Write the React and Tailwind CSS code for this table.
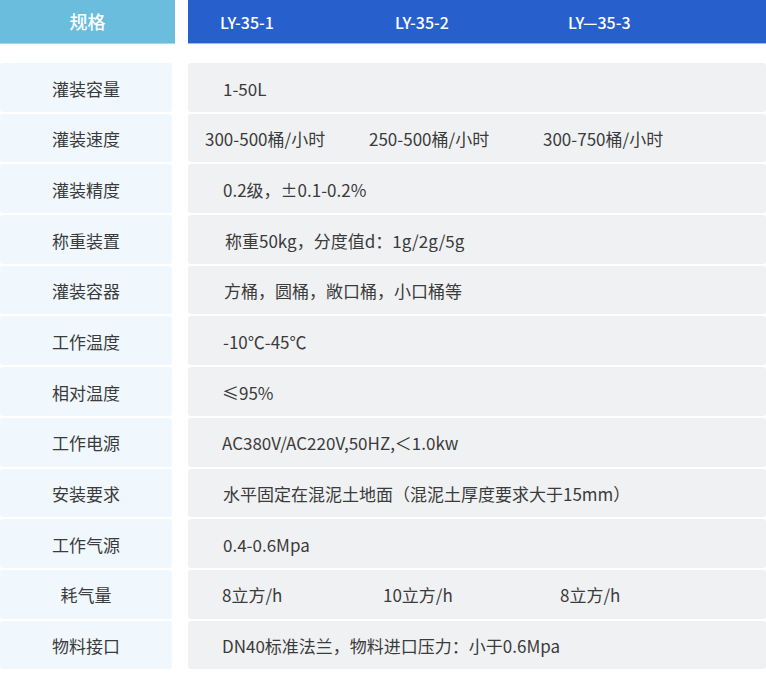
const header = [
  { text: "LY-35-1", w: "w-[175px]" },
  { text: "LY-35-2", w: "w-[173px]" },
  { text: "LY—35-3", w: "" },
];

const rows = [
  { label: "灌装容量", pad: "pl-[35px]", cells: [{ text: "1-50L" }] },
  {
    label: "灌装速度",
    pad: "pl-[17px]",
    cells: [
      { text: "300-500桶/小时", w: "w-[164px]" },
      { text: "250-500桶/小时", w: "w-[174px]" },
      { text: "300-750桶/小时" },
    ],
  },
  { label: "灌装精度", pad: "pl-[35px]", cells: [{ text: "0.2级，±0.1-0.2%" }] },
  { label: "称重装置", pad: "pl-[37px]", cells: [{ text: "称重50kg，分度值d：1g/2g/5g" }] },
  { label: "灌装容器", pad: "pl-[36px]", cells: [{ text: "方桶，圆桶，敞口桶，小口桶等" }] },
  { label: "工作温度", pad: "pl-[35px]", cells: [{ text: "-10℃-45℃" }] },
  { label: "相对温度", pad: "pl-[34px]", cells: [{ text: "≤95%" }] },
  { label: "工作电源", pad: "pl-[34px]", cells: [{ text: "AC380V/AC220V,50HZ,＜1.0kw" }] },
  { label: "安装要求", pad: "pl-[35px]", cells: [{ text: "水平固定在混泥土地面（混泥土厚度要求大于15mm）" }] },
  { label: "工作气源", pad: "pl-[35px]", cells: [{ text: "0.4-0.6Mpa" }] },
  {
    label: "耗气量",
    pad: "pl-[34px]",
    cells: [
      { text: "8立方/h", w: "w-[161px]" },
      { text: "10立方/h", w: "w-[177px]" },
      { text: "8立方/h" },
    ],
  },
  { label: "物料接口", pad: "pl-[34px]", cells: [{ text: "DN40标准法兰，物料进口压力：小于0.6Mpa" }] },
];

export default function App() {
  return (
    <div
      className="w-[766px] h-[674px] bg-white text-[17px] text-[#3b3b3b]"
      style={{ fontFamily: '"Noto Sans CJK SC", "Noto Sans", sans-serif' }}
    >
      {/* Header */}
      <div className="flex h-[44px] gap-[13px]">
        <div className="w-[175px] flex items-center justify-center bg-[#6bbddd] border-b border-[#a6d6ec] text-white text-[18px] font-medium">
          规格
        </div>
        <div className="flex-1 flex items-center pl-[32px] bg-[#2760cc] border-b border-[#9dbbea] text-white text-[16px] font-medium">
          {header.map((h) => (
            <span key={h.text} className={h.w}>
              {h.text}
            </span>
          ))}
        </div>
      </div>

      {/* Spec rows */}
      <div className="mt-[19px] flex flex-col gap-[2px]">
        {rows.map((row) => (
          <div key={row.label} className="flex h-[48.7px] gap-[16px]">
            <div className="w-[172px] flex items-center justify-center bg-[#f0f8fe] rounded-[3px] pt-[2px]">
              {row.label}
            </div>
            <div className={`flex-1 flex items-center bg-[#f0f1f3] rounded-[3px] pt-[2px] ${row.pad}`}>
              {row.cells.map((c, i) => (
                <span key={i} className={c.w || ""}>
                  {c.text}
                </span>
              ))}
            </div>
          </div>
        ))}
      </div>
    </div>
  );
}
